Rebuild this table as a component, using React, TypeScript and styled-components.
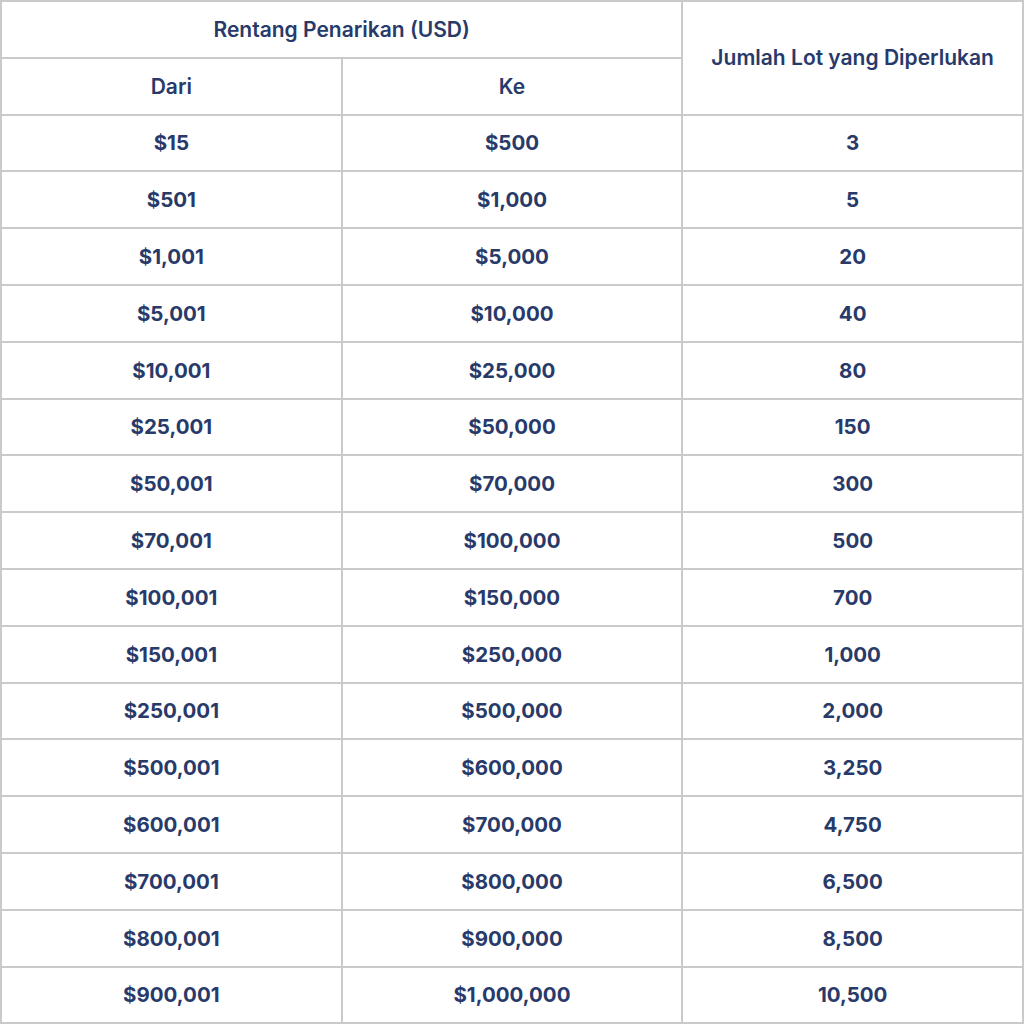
import React from "react";
import styled, { createGlobalStyle } from "styled-components";

const GlobalStyle = createGlobalStyle`
  html, body {
    margin: 0;
    padding: 0;
    background: #ffffff;
  }
`;

const Table = styled.table`
  width: 1024px;
  height: 1023px;
  border-collapse: collapse;
  table-layout: fixed;
  font-family: Inter, "Noto Sans", sans-serif;
  color: #283a69;
`;

const Row = styled.tr`
  height: 56.8px;
`;

const HeadCell = styled.th`
  border: 2px solid #cacaca;
  font-size: 21px;
  font-weight: 600;
  text-align: center;
  vertical-align: middle;
  padding: 0;
`;

const Cell = styled.td`
  border: 2px solid #cacaca;
  font-size: 20.5px;
  font-weight: 700;
  text-align: center;
  vertical-align: middle;
  padding: 0;
`;

const rows: [string, string, string][] = [
  ["$15", "$500", "3"],
  ["$501", "$1,000", "5"],
  ["$1,001", "$5,000", "20"],
  ["$5,001", "$10,000", "40"],
  ["$10,001", "$25,000", "80"],
  ["$25,001", "$50,000", "150"],
  ["$50,001", "$70,000", "300"],
  ["$70,001", "$100,000", "500"],
  ["$100,001", "$150,000", "700"],
  ["$150,001", "$250,000", "1,000"],
  ["$250,001", "$500,000", "2,000"],
  ["$500,001", "$600,000", "3,250"],
  ["$600,001", "$700,000", "4,750"],
  ["$700,001", "$800,000", "6,500"],
  ["$800,001", "$900,000", "8,500"],
  ["$900,001", "$1,000,000", "10,500"],
];

const App: React.FC = () => {
  return (
    <>
      <GlobalStyle />
      <Table>
        <thead>
          <Row>
            <HeadCell colSpan={2}>Rentang Penarikan (USD)</HeadCell>
            <HeadCell rowSpan={2}>Jumlah Lot yang Diperlukan</HeadCell>
          </Row>
          <Row>
            <HeadCell>Dari</HeadCell>
            <HeadCell>Ke</HeadCell>
          </Row>
        </thead>
        <tbody>
          {rows.map(([from, to, lots]) => (
            <Row key={from}>
              <Cell>{from}</Cell>
              <Cell>{to}</Cell>
              <Cell>{lots}</Cell>
            </Row>
          ))}
        </tbody>
      </Table>
    </>
  );
};

export default App;
